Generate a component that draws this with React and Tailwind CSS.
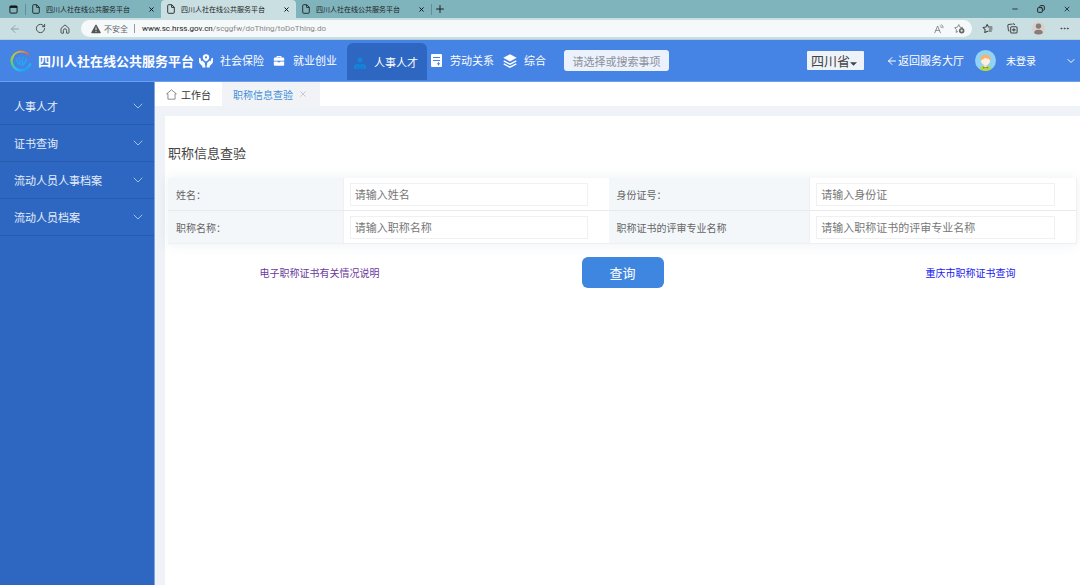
import React from "react";
import {
  ArrowLeft,
  ChevronDown,
  Copy,
  Ellipsis,
  Minus,
  Plus,
  RotateCw,
  X,
} from "lucide-react";

const SITE_NAME = "四川人社在线公共服务平台";

const sideItems = ["人事人才", "证书查询", "流动人员人事档案", "流动人员档案"];

const fields = [
  { id: "name", label: "姓名：", placeholder: "请输入姓名" },
  { id: "idcard", label: "身份证号：", placeholder: "请输入身份证" },
  { id: "title", label: "职称名称：", placeholder: "请输入职称名称" },
  {
    id: "major",
    label: "职称证书的评审专业名称",
    placeholder: "请输入职称证书的评审专业名称",
  },
];

function WindowIcon() {
  return (
    <svg viewBox="0 0 10 10" className="size-[9px]" fill="none" stroke="#111" aria-hidden="true">
      <rect x="1" y="1" width="8" height="8" rx="1" strokeWidth="1" />
      <path d="M1 2.2h8" strokeWidth="2" />
    </svg>
  );
}

function PageIcon() {
  return (
    <svg viewBox="0 0 8 10" className="h-[10px] w-2 shrink-0" fill="none" stroke="#222" strokeWidth="0.9" aria-hidden="true">
      <path d="M1.5.7h3.2L7.3 3.2v5.1a1 1 0 0 1-1 1H1.7a1 1 0 0 1-1-1V1.6a.9.9 0 0 1 .8-.9ZM4.6.8v2.6h2.6" />
    </svg>
  );
}

function BrowserHomeIcon() {
  return (
    <svg viewBox="0 0 10 10" className="size-[10px]" fill="none" stroke="#444" strokeWidth="0.9" strokeLinejoin="round" aria-hidden="true">
      <path d="M1 4.4 5 .9l4 3.5v4a.8.8 0 0 1-.8.8H6.6V6.4a1.6 1.6 0 0 0-3.2 0v2.8H1.8a.8.8 0 0 1-.8-.8Z" />
    </svg>
  );
}

function WarningIcon() {
  return (
    <svg viewBox="0 0 10 10" className="size-[10px] shrink-0" aria-hidden="true">
      <path d="M4.4 1a.7.7 0 0 1 1.2 0l4 7.2a.7.7 0 0 1-.6 1H1a.7.7 0 0 1-.6-1Z" fill="#555" />
      <path d="M5 3.4v2.8M5 7.1v.9" stroke="#f5f9fa" strokeWidth="0.9" />
    </svg>
  );
}

function ReadAloudIcon() {
  return (
    <svg viewBox="0 0 10 10" className="size-[10px]" fill="none" stroke="#777" strokeWidth="0.8" strokeLinecap="round" aria-hidden="true">
      <path d="M.8 8.8 3.6 2l2.8 6.8M1.8 6.4h3.6M6.3 1.6q1 .8 1 2M7.6.6q1.6 1.2 1.5 3.2" />
    </svg>
  );
}

function AddStarIcon() {
  return (
    <svg viewBox="0 0 12 12" className="size-[11px]" fill="none" stroke="#777" strokeWidth="0.9" strokeLinejoin="round" aria-hidden="true">
      <path d="m4.6 9-2.3 1.3.4-3L.8 5.1l2.9-.5L5.2 1.7l1.4 2.9 3.2.5" />
      <circle cx="8.4" cy="8.4" r="3" fill="#666" stroke="none" />
      <path d="M8.4 6.9v3M6.9 8.4h3" stroke="#f5f9fa" strokeWidth="0.8" />
    </svg>
  );
}

function FavouritesIcon() {
  return (
    <svg viewBox="0 0 12 12" className="size-[11px]" fill="none" stroke="#444" strokeWidth="1.1" strokeLinejoin="round" strokeLinecap="round" aria-hidden="true">
      <path d="M6.2 9 3 10.4l.4-3.2L1.1 4.9l3.2-.5L5.6 1.5l1.5 2.9h3.8M8 6.6h3M7.6 8.8h2.6" />
    </svg>
  );
}

function CollectionsIcon() {
  return (
    <svg viewBox="0 0 12 12" className="size-[11px]" fill="none" stroke="#444" strokeWidth="1.1" aria-hidden="true">
      <rect x="4" y="4" width="7" height="7" rx="1.2" />
      <path d="M2.6 9A1.8 1.8 0 0 1 1.5 7.6L.9 3.2A1.4 1.4 0 0 1 2 1.6L6.6.9A1.4 1.4 0 0 1 8.3 2.2M7.5 5.6v3.8M5.600 7.500h3.800" />
    </svg>
  );
}

function ProfileIcon() {
  return (
    <svg viewBox="0 0 14 14" className="size-[13px]" aria-hidden="true">
      <circle cx="7" cy="7" r="7" fill="#d9d0cb" />
      <circle cx="7" cy="4.4" r="2.9" fill="#897b75" />
      <path d="M2.4 12q-.2-3.6 4.600-3.600T11.600 12Q7 14.800 2.400 12Z" fill="#897b75" />
    </svg>
  );
}

function LogoIcon() {
  return (
    <svg viewBox="0 0 22 22" className="size-[22px] shrink-0" fill="none" strokeLinecap="round" aria-hidden="true">
      <defs>
        <linearGradient id="ring-top" x1="0" y1="0" x2="1" y2="0">
          <stop offset="0" stopColor="#c5cf2c" />
          <stop offset="0.45" stopColor="#f0a02e" />
          <stop offset="1" stopColor="#cf6a4a" />
        </linearGradient>
        <linearGradient id="ring-low" x1="0" y1="0" x2="0.8" y2="1">
          <stop offset="0" stopColor="#a5d32c" />
          <stop offset="0.35" stopColor="#4fd07a" />
          <stop offset="0.65" stopColor="#25c3f0" />
          <stop offset="1" stopColor="#1f9bf5" />
        </linearGradient>
      </defs>
      <path d="M2.600 7C5.400.900 13.800-.2 18.600 4.300" stroke="url(#ring-top)" strokeWidth="1.700" />
      <path d="M2.600 7C-.6 13.500 4.800 20.700 11.500 20.500c4.500-.2 7.300-2.800 8.700-6.300" stroke="url(#ring-low)" strokeWidth="2.300" />
      <path d="M6.700 9.300c.4 1.900 1.200 3.600 2.600 5.100.8-1.200 1.100-2.500 1-4M12.200 10c.5 1.800.5 3.500-.2 5.200 2.600-1.100 4.100-3.400 4-6.700" stroke="#25a9f2" strokeWidth="1.400" />
      <circle cx="9.300" cy="8" r="0.900" fill="#25a9f2" />
      <circle cx="13.200" cy="7.800" r="0.900" fill="#25a9f2" />
    </svg>
  );
}

function HandsIcon() {
  return (
    <svg viewBox="0 0 14 14" className="size-[14px]" fill="#fff" aria-hidden="true">
      <path d="M7 .3a3.200 3.200 0 0 1 3.200 3.200c0 1.900-1.400 3-3.200 4.100C5.200 6.500 3.800 5.400 3.800 3.500A3.200 3.200 0 0 1 7 .3Z" />
      <circle cx="7" cy="3.400" r="1.100" fill="#4583e4" />
      <path d="M0 4.200q.9-.9 1.600.4l.6 2.700 2.900 2.100q1.300 1 1.200 2.300v1.900H3.300v-1.500L.7 9.400Q.1 8.700.1 7.500ZM14 4.200q-.9-.9-1.600.4l-.6 2.700-2.900 2.100q-1.300 1-1.200 2.300v1.900h3v-1.500l2.600-2.700q.6-.7.6-1.900Z" />
      <path d="m3 7.200 2.300 2M11 7.200l-2.300 2" stroke="#fff" strokeWidth="1.300" strokeLinecap="round" />
    </svg>
  );
}

function BriefcaseIcon() {
  return (
    <svg viewBox="0 0 12 12" className="size-3" fill="#fff" aria-hidden="true">
      <path d="M3.500 2.600V1.800q0-.8.8-.8h3.400q.8 0 .8.800v.8h1.700q1 0 1 1v2.200H.8V3.600q0-1 1-1Zm1 0h3v-.7h-3Z" />
      <path d="M.8 6.500h4v.8h2.400v-.8h4v3.200q0 1-1 1H1.800q-1 0-1-1Z" />
    </svg>
  );
}

function PeopleIcon() {
  return (
    <svg viewBox="0 0 12 12" className="size-3" fill="#1484d6" aria-hidden="true">
      <circle cx="6" cy="3" r="2.600" />
      <path d="M0 12V10q0-2.500 3-3l2.200-.2L6 8l.8-1.200L9 7q3 .5 3 3v2H9.200V9.400h-.7V12h-2L6 8.800 5.500 12h-2V9.400h-.7V12Z" />
    </svg>
  );
}

function DocumentIcon() {
  return (
    <svg viewBox="0 0 11 13" className="h-[13px] w-[11px]" aria-hidden="true">
      <rect width="11" height="13" rx="1" fill="#fff" />
      <path d="M2 3.500h7M2 6.500h7" stroke="#4583e4" strokeWidth="1" />
      <path d="M7.500 8.200v3.200M5.900 9.800h3.200" stroke="#4583e4" strokeWidth="1" />
    </svg>
  );
}

function LayersIcon() {
  return (
    <svg viewBox="0 0 14 14" className="size-[14px]" aria-hidden="true">
      <path d="m7 .3 6.700 3.500L7 7.400.3 3.800Z" fill="#fff" />
      <path d="m.7 6.900 6.300 3.300 6.300-3.300M.7 9.900 7 13.200l6.300-3.300" fill="none" stroke="#fff" strokeWidth="1.300" />
    </svg>
  );
}

function AvatarIcon() {
  return (
    <svg viewBox="0 0 22 22" className="size-[21px]" aria-hidden="true">
      <defs>
        <clipPath id="avatar-clip"><circle cx="11" cy="11" r="11" /></clipPath>
      </defs>
      <g clipPath="url(#avatar-clip)">
        <rect width="22" height="22" fill="#92d3f5" />
        <path d="M4.500 22q0-5 4-5h5q4 0 4 5Z" fill="#b5d93c" />
        <path d="M9 14h4v3.200q-2 1.600-4 0Z" fill="#fbd9c0" />
        <circle cx="11" cy="11.200" r="4.700" fill="#fdeee4" />
        <path d="M5.800 11Q4.800 5 11 4.700 17.200 5 16.200 11q-1.200-.6-1.700-2.200Q13 9.600 10.500 8 8 10.200 5.800 11Z" fill="#f5b467" />
        <path d="m8.300 17.300 2.700 1 2.700-1v2.200l-2.700-.8-2.700.8Z" fill="#6b9d2b" />
      </g>
    </svg>
  );
}

function DeskIcon() {
  return (
    <svg viewBox="0 0 12 12" className="size-[11px]" fill="none" stroke="#777" strokeWidth="0.9" strokeLinejoin="round" aria-hidden="true">
      <path d="M.7 5.300 6 .9l5.300 4.400H9.900v5.800H2.100V5.300Z" />
    </svg>
  );
}

function BrowserTab({ active }) {
  return (
    <div
      className={
        active
          ? "flex w-[135px] items-center rounded-t-sm bg-[#c9dfe2] px-[6px]"
          : "flex w-[135px] items-center px-[6px]"
      }
    >
      <PageIcon />
      <span className="ml-[6px] flex-1 whitespace-nowrap text-[7px] text-[#222]">{SITE_NAME}</span>
      <button type="button" aria-label="关闭标签页">
        <X className="size-[7px] text-black" strokeWidth={3} />
      </button>
    </div>
  );
}

function Browser() {
  return (
    <div className="shrink-0">
      <div className="flex h-[18px] bg-[#7fb4bd]">
        <div className="flex w-[26px] items-center justify-between pl-[9px]">
          <WindowIcon />
          <span className="h-[11px] w-px bg-[#5f8f98]" />
        </div>
        <BrowserTab />
        <BrowserTab active />
        <BrowserTab />
        <div className="flex items-center gap-[2px]">
          <span className="h-[11px] w-px bg-[#5f8f98]" />
          <button type="button" aria-label="新建标签页">
            <Plus className="size-3 text-[#222]" strokeWidth={2} />
          </button>
        </div>
        <div className="ml-auto flex items-center gap-[18px] pr-[9px] text-[#222]">
          <button type="button" aria-label="最小化"><Minus className="size-2" strokeWidth={2.5} /></button>
          <button type="button" aria-label="还原"><Copy className="size-2 -scale-x-100" strokeWidth={3} /></button>
          <button type="button" aria-label="关闭"><X className="size-2" strokeWidth={2.5} /></button>
        </div>
      </div>
      <div className="flex h-[22px] items-center border-b border-[#b5cfd6] bg-[#c9dfe2]">
        <div className="flex w-[81px] items-center gap-[14px] pl-[9px]">
          <button type="button" aria-label="后退"><ArrowLeft className="size-3 text-[#8fa3a6]" strokeWidth={2} /></button>
          <button type="button" aria-label="刷新"><RotateCw className="size-[11px] text-[#444]" strokeWidth={2} /></button>
          <button type="button" aria-label="主页"><BrowserHomeIcon /></button>
        </div>
        <div className="flex h-[17px] flex-1 items-center rounded-full bg-[#f5f9fa] pl-[10px] pr-[7px]">
          <WarningIcon />
          <span className="ml-[3px] text-[8px] text-[#666]">不安全</span>
          <span className="ml-[6px] mr-[7px] h-[9px] w-px bg-[#999]" />
          <span className="flex-1 font-[Roboto,sans-serif] text-[8px] text-[#888]">
            <span className="text-[#222]">www.sc.hrss.gov.cn</span>/scggfw/doThing/toDoThing.do
          </span>
          <div className="flex items-center gap-[10px]">
            <button type="button" aria-label="朗读此页内容"><ReadAloudIcon /></button>
            <button type="button" aria-label="添加到收藏夹"><AddStarIcon /></button>
          </div>
        </div>
        <div className="flex items-center gap-[14px] px-[10px]">
          <button type="button" aria-label="收藏夹"><FavouritesIcon /></button>
          <button type="button" aria-label="集锦"><CollectionsIcon /></button>
          <button type="button" aria-label="个人资料"><ProfileIcon /></button>
          <button type="button" aria-label="设置及其他"><Ellipsis className="size-[11px] text-[#444]" strokeWidth={2} /></button>
        </div>
      </div>
    </div>
  );
}

function Header() {
  return (
    <header className="flex h-[42px] shrink-0 items-center whitespace-nowrap border-b border-[#6e9fee] bg-[#4583e4] text-[11px] text-white">
      <div className="flex w-[199px] items-center gap-[6px] pl-[10px]">
        <LogoIcon />
        <h1 className="text-[13px] font-bold">{SITE_NAME}</h1>
      </div>
      <nav className="flex h-full items-center">
        <a href="#insurance" className="flex w-[74px] items-center gap-[7px]"><HandsIcon />社会保险</a>
        <a href="#employment" className="flex w-[74px] items-center gap-2"><BriefcaseIcon />就业创业</a>
        <a
          href="#personnel"
          aria-current="page"
          className="mt-[2px] flex h-[37px] w-20 items-center gap-2 rounded-t-md bg-[#2d67c1] px-[7px] pt-[2px]"
        >
          <PeopleIcon />人事人才
        </a>
        <a href="#labour" className="flex w-[76px] items-center gap-2 pl-1"><DocumentIcon />劳动关系</a>
        <a href="#general" className="flex w-[61px] items-center gap-[7px]"><LayersIcon />综合</a>
      </nav>
      <input
        type="text"
        aria-label="搜索事项"
        placeholder="请选择或搜索事项"
        className="h-[21px] w-[105px] rounded-[3px] bg-[#ebf1fd] px-2 text-center text-[11px] text-[#333] outline-none placeholder:text-[#8c9099]"
      />
      <div className="ml-auto flex items-center pr-[3px]">
        <div className="relative mr-[22px]">
          <select
            aria-label="地区"
            className="h-[19px] w-[57px] appearance-none rounded-[1px] bg-[#eef3f9] pl-1 text-[13px] leading-[19px] text-[#444] outline-none"
          >
            <option>四川省</option>
          </select>
          <svg viewBox="0 0 8 4" className="pointer-events-none absolute right-[7px] top-[11px] h-1 w-[7px]" fill="#444" aria-hidden="true">
            <path d="M0 0h8L4 4Z" />
          </svg>
        </div>
        <a href="#hall" className="mr-[11px] flex items-center">
          <ArrowLeft className="size-3" strokeWidth={2} />返回服务大厅
        </a>
        <button type="button" className="flex items-center gap-[10px] text-[10px]">
          <AvatarIcon />未登录
          <ChevronDown className="ml-[19px] size-3" strokeWidth={2} />
        </button>
      </div>
    </header>
  );
}

function Sidebar() {
  return (
    <aside className="w-[155px] shrink-0 border-r border-[#7fa6e3] bg-[#2d67c1] pt-[6px] text-[11px] text-[#e6eefa]">
      {sideItems.map((item) => (
        <button
          key={item}
          type="button"
          className="flex h-[37px] w-full items-center justify-between border-b border-[#275bad] pl-[14px] pr-2"
        >
          {item}
          <ChevronDown className="size-4 text-[#a3bfea]" strokeWidth={1.5} />
        </button>
      ))}
    </aside>
  );
}

function QueryForm() {
  return (
    <form className="px-[3px] pt-[27px]" onSubmit={(e) => e.preventDefault()}>
      <h2 className="text-[13px] leading-5 text-[#444]">职称信息查验</h2>
      <div className="mt-[15px] grid grid-cols-[175fr_266fr_201fr_267fr] gap-y-px border-b border-r border-[#eef0f2] bg-[#e8eaec] text-[10px] shadow-[0_0_12px_rgba(100,130,160,0.12)]">
        {fields.map((field) => (
          <React.Fragment key={field.id}>
            <label htmlFor={field.id} className="flex items-center bg-[#f3f7fa] pl-2 text-[#666]">
              {field.label}
            </label>
            <div className="flex h-8 items-center border-l border-[#eef0f2] bg-white pl-[6px] pr-[21px]">
              <input
                id={field.id}
                type="text"
                placeholder={field.placeholder}
                className="h-[23px] w-full border border-[#f0f0f0] px-1 text-[11px] text-[#333] outline-none placeholder:text-[#777]"
              />
            </div>
          </React.Fragment>
        ))}
      </div>
      <div className="mt-[13px] grid grid-cols-3 items-center justify-items-center text-[10px]">
        <a href="#notice" className="text-[#6a3a9c]">电子职称证书有关情况说明</a>
        <button type="submit" className="h-[31px] w-[82px] rounded-md bg-[#3f86e0] text-[13px] text-white">
          查询
        </button>
        <a href="#chongqing" className="pl-[90px] text-[#1a1aee]">重庆市职称证书查询</a>
      </div>
    </form>
  );
}

export default function App() {
  return (
    <div className="flex min-h-screen flex-col bg-white font-['Noto_Sans_CJK_SC',sans-serif]">
      <Browser />
      <Header />
      <div className="flex flex-1">
        <Sidebar />
        <main className="flex min-w-0 flex-1 flex-col bg-[#eff2f6]">
          <div className="flex h-6 bg-white text-[10px]">
            <a href="#desk" className="flex w-[67px] items-center gap-1 pl-[11px] text-[#333]">
              <DeskIcon />工作台
            </a>
            <div className="flex w-[98px] items-center justify-between bg-[#f2f3f7] pl-[11px] pr-3 text-[#3f8fd8]">
              职称信息查验
              <button type="button" aria-label="关闭">
                <X className="size-[10px] text-[#c0c4cc]" strokeWidth={2} />
              </button>
            </div>
          </div>
          <div className="ml-[10px] mt-[10px] flex-1 bg-white">
            <QueryForm />
          </div>
        </main>
      </div>
    </div>
  );
}
